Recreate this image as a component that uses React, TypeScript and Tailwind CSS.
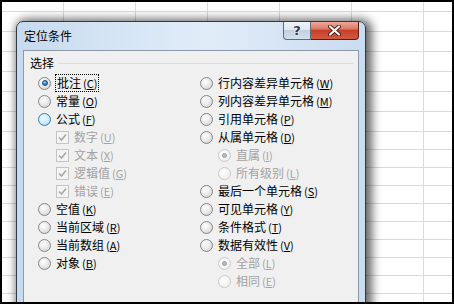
import React from "react"

type Item = {
  label: string
  k: string
  kind: "radio" | "check"
  indent?: boolean
  checked?: boolean
  disabled?: boolean
  hover?: boolean
  focus?: boolean
}

const leftItems: Item[] = [
  { label: "批注", k: "C", kind: "radio", checked: true, focus: true },
  { label: "常量", k: "O", kind: "radio" },
  { label: "公式", k: "F", kind: "radio", hover: true },
  { label: "数字", k: "U", kind: "check", indent: true, checked: true, disabled: true },
  { label: "文本", k: "X", kind: "check", indent: true, checked: true, disabled: true },
  { label: "逻辑值", k: "G", kind: "check", indent: true, checked: true, disabled: true },
  { label: "错误", k: "E", kind: "check", indent: true, checked: true, disabled: true },
  { label: "空值", k: "K", kind: "radio" },
  { label: "当前区域", k: "R", kind: "radio" },
  { label: "当前数组", k: "A", kind: "radio" },
  { label: "对象", k: "B", kind: "radio" },
]

const rightItems: Item[] = [
  { label: "行内容差异单元格", k: "W", kind: "radio" },
  { label: "列内容差异单元格", k: "M", kind: "radio" },
  { label: "引用单元格", k: "P", kind: "radio" },
  { label: "从属单元格", k: "D", kind: "radio" },
  { label: "直属", k: "I", kind: "radio", indent: true, checked: true, disabled: true },
  { label: "所有级别", k: "L", kind: "radio", indent: true, disabled: true },
  { label: "最后一个单元格", k: "S", kind: "radio" },
  { label: "可见单元格", k: "Y", kind: "radio" },
  { label: "条件格式", k: "T", kind: "radio" },
  { label: "数据有效性", k: "V", kind: "radio" },
  { label: "全部", k: "L", kind: "radio", indent: true, checked: true, disabled: true },
  { label: "相同", k: "E", kind: "radio", indent: true, disabled: true },
]

// excel sheet behind the dialog
const rowHeights = [10, 20, 20, 20, 20, 20, 20, 18, 18, 18, 18, 18, 18, 18, 18, 18, 20]
const colWidths = [62, 72, 72, 72, 72, 72, 40]

const Radio = ({ item }: { item: Item }) => {
  let ring = "border-[#858788] bg-[radial-gradient(circle_at_40%_35%,#ffffff_0%,#e8e8e8_50%,#c8c8c8_100%)]"
  if (item.hover) ring = "border-[#3d7bad] bg-[radial-gradient(circle_at_40%_35%,#f4fbff_0%,#c9ebfd_55%,#8fd1f5_100%)]"
  if (item.disabled) ring = "border-[#c9c9c9] bg-[radial-gradient(circle_at_40%_35%,#ffffff_0%,#f3f3f3_60%,#e6e6e6_100%)]"
  return (
    <span className={`flex h-[13px] w-[13px] shrink-0 items-center justify-center rounded-full border ${ring}`}>
      {item.checked && (
        <span
          className={
            item.disabled
              ? "h-[5px] w-[5px] rounded-full border border-[#9c9c9c] bg-[#b8b8b8]"
              : "h-[6px] w-[6px] rounded-full border border-[#1c4a78] bg-[radial-gradient(circle_at_40%_35%,#8fdcff_0%,#2a8fd8_50%,#0b4f91_100%)]"
          }
        />
      )}
    </span>
  )
}

const Check = () => (
  <span className="flex h-[13px] w-[13px] shrink-0 items-center justify-center border border-[#c4c4c4] bg-[#f4f4f4]">
    <svg width="9" height="9" viewBox="0 0 9 9">
      <path d="M1 4.5 L3.5 7 L8 1.5" fill="none" stroke="#a8a8a8" strokeWidth="1.6" />
    </svg>
  </span>
)

const Row = ({ item }: { item: Item }) => (
  <div className={`flex h-[18px] items-center ${item.indent ? "pl-[18px]" : ""}`}>
    {item.kind === "radio" ? <Radio item={item} /> : <Check />}
    <span
      className={`ml-[4px] whitespace-nowrap leading-[15px] ${
        item.focus ? "-my-px border border-dotted border-black px-px" : "px-px"
      } ${item.disabled ? "text-[#a3a3a3]" : "text-black"}`}
    >
      {item.label}
      <span className="ml-[2px] text-[11px]">
        (<span className="underline underline-offset-1">{item.k}</span>)
      </span>
    </span>
  </div>
)

export default function App() {
  return (
    <div className="h-[304px] w-[454px] bg-black p-[2px] font-['Noto_Sans_CJK_SC','Noto_Sans',sans-serif] text-[12px]">
      <div className="relative h-full w-full overflow-hidden bg-white">
        <div className="flex flex-col">
          {rowHeights.map((h, r) => (
            <div key={r} className="flex shrink-0" style={{ height: h }}>
              {colWidths.map((w, c) => (
                <div
                  key={c}
                  className="shrink-0 border-b border-r border-[#d9dadb]"
                  style={{ width: w, height: h }}
                />
              ))}
            </div>
          ))}
        </div>

        <div className="absolute left-[14px] top-[19px] flex h-[300px] w-[350px] flex-col rounded-t-[7px] border border-[#2f3a45] bg-[linear-gradient(90deg,#c7daef_0%,#d8e7f6_35%,#e1ecf8_55%,#cadcf0_100%)] px-[6px] shadow-[3px_1px_10px_3px_rgba(0,0,0,0.6)]">
          <div className="flex h-[28px] shrink-0 items-start justify-between">
            <span className="ml-px mt-[5px] leading-[18px] text-black">定位条件</span>
            <div className="flex">
              <div className="flex h-[18px] w-[28px] items-center justify-center rounded-bl-[4px] border border-t-0 border-[#5d6b7a] bg-[linear-gradient(180deg,#eef3f9_0%,#dfe7f0_45%,#c3d0de_50%,#d4e0ec_100%)]">
                <span className="font-['DejaVu_Sans',sans-serif] text-[13px] font-bold leading-none text-[#2e3a48] [text-shadow:0_0_1px_#fff,0_0_2px_#fff]">
                  ?
                </span>
              </div>
              <div className="flex h-[18px] w-[48px] items-center justify-center rounded-br-[4px] border border-l-0 border-t-0 border-[#5a1d15] bg-[linear-gradient(180deg,#eca89a_0%,#df7a66_40%,#c7402b_50%,#d25a40_100%)]">
                <svg width="13" height="11" viewBox="0 0 13 11">
                  <path d="M2 1.5 L11 9.5 M11 1.5 L2 9.5" stroke="#4a1b14" strokeWidth="4" strokeLinecap="round" />
                  <path d="M2 1.5 L11 9.5 M11 1.5 L2 9.5" stroke="#ffffff" strokeWidth="2.2" strokeLinecap="round" />
                </svg>
              </div>
            </div>
          </div>

          <div className="flex-1 border border-[#8b99a8] bg-[#f0f0f0]">
            <div className="mt-[3px] flex h-[18px] items-center pl-[6px] pr-[5px]">
              <span className="leading-[18px] text-black">选择</span>
              <div className="ml-[5px] h-px flex-1 bg-[#d5dfe5]" />
            </div>
            <div className="mt-[2px] grid grid-cols-[162px_1fr] pl-[14px]">
              <div className="flex flex-col">
                {leftItems.map((it, i) => (
                  <Row key={i} item={it} />
                ))}
              </div>
              <div className="flex flex-col">
                {rightItems.map((it, i) => (
                  <Row key={i} item={it} />
                ))}
              </div>
            </div>
          </div>
        </div>
      </div>
    </div>
  )
}
